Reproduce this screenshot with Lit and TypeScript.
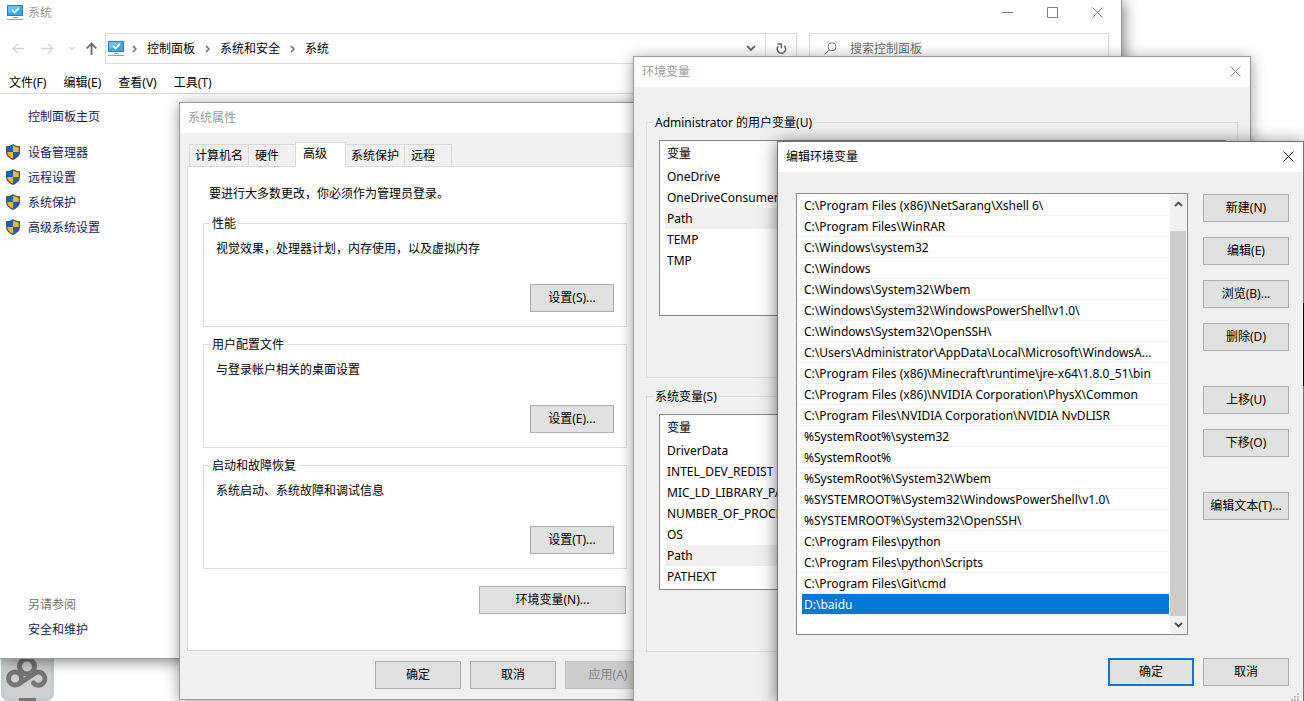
import { LitElement, html, css } from "lit";
import { customElement, property } from "lit/decorators.js";
import { classMap } from "lit/directives/class-map.js";

const base = css`
  *, *::before, *::after { box-sizing: border-box; }
  :host { display: block; }
  button, input, select { font: inherit; color: inherit; margin: 0; }
  svg { display: block; flex: none; }
  .btn {
    height: 28px; width: 86px; padding: 0; flex: none;
    background: #e1e1e1; border: 1px solid #adadad; border-radius: 0;
    white-space: nowrap; text-align: center; color: #000;
  }
  .btn.default { border: 2px solid #0078d7; }
  .btn:disabled { background: #cccccc; border-color: #bfbfbf; color: #838383; }
  .group {
    margin: 0; min-width: 0; border: 1px solid #dcdcdc; padding: 0;
  }
  .group > legend { padding: 2px 2px 0; line-height: 16px; margin-left: -6px; }
`;

const closeGlyph = (color: string) => html`
  <svg width="11" height="11" viewBox="0 0 11 11"><path d="M.5 .5L10.5 10.5M10.5 .5L.5 10.5" stroke=${color} fill="none"/></svg>`;

const monitor = html`
  <svg width="17" height="16" viewBox="0 0 17 16">
    <rect x=".5" y=".5" width="15" height="10" fill="#35a9f5" stroke="#3b7ba6"/>
    <path d="M1 1h14L1 8z" fill="#62c4fb"/>
    <path d="M5 5l2.500 2.500L12 3" stroke="#fff" stroke-width="1.800" fill="none"/>
    <path d="M6 12.500h5M0 14.500h16" stroke="#8ba3b4" stroke-width="1.200" fill="none"/>
  </svg>`;

const shield = html`
  <svg width="14" height="16" viewBox="0 0 14 16">
    <path d="M7 0C5 1.600 2.500 2.200 0 2.300V8c0 4 3.500 6.500 7 8 3.500-1.500 7-4 7-8V2.300C11.500 2.200 9 1.600 7 0z" fill="#4d5459"/>
    <path d="M7 1.500C5.500 2.700 3.500 3.200 1.300 3.400V8H7z" fill="#0d62c4"/>
    <path d="M7 1.500c1.500 1.200 3.500 1.700 5.700 1.900V8H7z" fill="#fdb72a"/>
    <path d="M1.300 8c0 3 2.700 5.200 5.700 6.600V8z" fill="#fdb72a"/>
    <path d="M12.700 8c0 3-2.700 5.200-5.700 6.600V8z" fill="#0d62c4"/>
  </svg>`;

const crumb = html`
  <svg class="crumb" width="5" height="8" viewBox="0 0 5 8"><path d="M1 1l3 3-3 3" stroke="#6d6d6d" stroke-width="1.500" fill="none"/></svg>`;

@customElement("control-panel")
class ControlPanel extends LitElement {
  static styles = [base, css`
    :host { display: flex; flex-direction: column; background: #fff; border: 1px solid #9a9a9a; border-width: 0 1px 1px 0; box-shadow: 2px 2px 14px rgba(0,0,0,.5); }
    .title { display: flex; align-items: center; height: 26px; padding-left: 7px; color: #999; }
    .title span { margin-left: 4px; flex: 1; }
    .caps { display: flex; gap: 34px; padding: 0 18px 2px 0; align-items: center; }
    .caps button { border: 0; background: none; padding: 0; }
    .bar { display: flex; align-items: center; margin-top: 7px; height: 31px; padding: 0 12px; }
    .nav { display: flex; align-items: center; width: 93px; flex: none; }
    .nav svg + svg { margin-left: 16px; }
    .nav svg.recent { margin-left: 15px; }
    .nav svg.up { margin-left: 11px; }
    .path { display: flex; flex: 1; align-items: center; border: 1px solid #d9d9d9; height: 31px; padding-left: 2px; min-width: 0; }
    .path .crumb { margin: 0 10px; }
    .path .crumb.first { margin: 0 10px 0 7px; }
    .path a { color: #000; text-decoration: none; white-space: nowrap; }
    .fill { flex: 1; }
    .refresh { width: 31px; height: 29px; margin-left: 9px; border: 0; border-left: 1px solid #d9d9d9; background: none; padding: 0 0 0 9px; }
    .search { display: flex; align-items: center; margin-left: 12px; width: 300px; height: 31px; border: 1px solid #d9d9d9; padding-left: 14px; }
    .search input { border: 0; outline: 0; background: none; padding: 0; margin-left: 13px; flex: 1; min-width: 0; }
    .search input::placeholder { color: #6d6d6d; opacity: 1; }
    .menu { display: flex; gap: 17px; height: 30px; padding: 8px 9px 0; line-height: 22px; border-bottom: 1px solid #d6d6d6; }
    .menu button { border: 0; background: none; padding: 0; line-height: 22px; height: 22px; }
    .side { flex: 1; display: flex; flex-direction: column; padding: 10px 6px 16px; line-height: 25px; }
    .side a { display: flex; align-items: center; height: 25px; color: #151c55; text-decoration: none; }
    .side svg { margin: 0 8px 2px 0; }
    .side .plain { padding-left: 22px; }
    .home { margin-bottom: 11px; }
    .also { margin-top: auto; color: #707070; }
  `];
  render() {
    return html`
      <div class="title">${monitor}<span>系统</span>
        <div class="caps">
          <button aria-label="最小化"><svg width="11" height="11" viewBox="0 0 11 11"><path d="M0 5.500h11" stroke="#7b7b7b"/></svg></button>
          <button aria-label="最大化"><svg width="11" height="11" viewBox="0 0 11 11"><path d="M.5 .5h10v10H.5z" stroke="#7b7b7b" fill="none"/></svg></button>
          <button aria-label="关闭">${closeGlyph("#7b7b7b")}</button>
        </div>
      </div>
      <div class="bar">
        <div class="nav">
          <svg width="13" height="11" viewBox="0 0 13 11"><path d="M12 5.500H1M6 .8L1.200 5.500 6 10.200" stroke="#d4d4d4" stroke-width="1.500" fill="none"/></svg>
          <svg width="13" height="11" viewBox="0 0 13 11"><path d="M0 5.500h11.500M7 .8l4.800 4.700L7 10.200" stroke="#d4d4d4" stroke-width="1.500" fill="none"/></svg>
          <svg class="recent" width="6" height="5" viewBox="0 0 6 5"><path d="M.5 1L3 3.500 5.500 1" stroke="#d4d4d4" stroke-width="1.300" fill="none"/></svg>
          <svg class="up" width="11" height="13" viewBox="0 0 11 13"><path d="M5.500 13V1.500M.7 6.300L5.500 1.500l4.800 4.800" stroke="#6c6c6c" stroke-width="1.800" fill="none"/></svg>
        </div>
        <div class="path">${monitor}
          <svg class="crumb first" width="5" height="8" viewBox="0 0 5 8"><path d="M1 1l3 3-3 3" stroke="#6d6d6d" stroke-width="1.500" fill="none"/></svg>
          <a href="#">控制面板</a>${crumb}<a href="#">系统和安全</a>${crumb}<a href="#">系统</a>
          <span class="fill"></span>
          <svg width="10" height="7" viewBox="0 0 10 7"><path d="M1 1l4 4 4-4" stroke="#6d6d6d" stroke-width="1.900" fill="none"/></svg>
          <button class="refresh" aria-label="刷新"><svg width="13" height="13" viewBox="0 0 13 13"><path d="M9.200 3.800A4.200 4.200 0 1 1 3.200 4.200" stroke="#6d6d6d" stroke-width="1.700" fill="none"/><path d="M2.200 2h4.200v4.200" stroke="#6d6d6d" stroke-width="1.600" fill="none"/></svg></button>
        </div>
        <label class="search" aria-label="搜索控制面板">
          <svg width="13" height="13" viewBox="0 0 13 13"><circle cx="8" cy="4.800" r="4" stroke="#808080" fill="none"/><path d="M5.200 7.700L.5 12.500" stroke="#808080"/></svg>
          <input type="text" placeholder="搜索控制面板" />
        </label>
      </div>
      <div class="menu"><button>文件(F)</button><button>编辑(E)</button><button>查看(V)</button><button>工具(T)</button></div>
      <nav class="side">
        <a class="plain home" href="#">控制面板主页</a>
        ${["设备管理器", "远程设置", "系统保护", "高级系统设置"].map((t) => html`<a href="#">${shield}${t}</a>`)}
        <div class="plain also">另请参阅</div>
        <a class="plain" href="#">安全和维护</a>
      </nav>`;
  }
}

@customElement("dialog-frame")
class DialogFrame extends LitElement {
  @property() heading = "";
  @property({ type: Boolean }) active = false;
  static styles = [base, css`
    :host { display: flex; flex-direction: column; background: #f0f0f0; border: 1px solid #9a9a9a; box-shadow: 0 2px 14px rgba(0,0,0,.4); }
    :host([active]) { border-color: #6f6f73; box-shadow: 0 2px 16px rgba(0,0,0,.55); }
    .title { display: flex; align-items: center; justify-content: space-between; height: 30px; flex: none; background: #fff; padding: 0 9px 0 8px; color: #999; }
    .title.active { color: #000; }
    .title button { border: 0; background: none; padding: 0 0 2px; }
  `];
  render() {
    return html`
      <header class=${classMap({ title: true, active: this.active })}>
        <span>${this.heading}</span>
        <button aria-label="关闭">${closeGlyph(this.active ? "#000" : "#8a8a8a")}</button>
      </header>
      <slot></slot>`;
  }
}

@customElement("app-root")
class AppRoot extends LitElement {
  static styles = [base, css`
    :host {
      display: block; position: relative; height: 100vh; min-height: 100%; overflow: hidden; background: #fff;
      font-family: "Noto Sans", "Noto Sans CJK SC", sans-serif; font-size: 12px; line-height: 16px; color: #000;
    }
    .shortcut { position: absolute; left: 1px; top: 647px; }
    .edge { position: absolute; right: 0; top: 303px; width: 1px; height: 83px; background: #000; z-index: 2; }
    control-panel { position: absolute; left: 0; right: 182px; top: 0; height: 659px; }
    .props { position: absolute; left: 179px; top: 102px; width: 480px; }
    .env { position: absolute; left: 633px; right: 53px; top: 56px; }
    .edit { position: absolute; left: 777px; right: 0; top: 141px; }

    .tabs { display: flex; align-items: flex-end; padding: 9px 0 0 9px; }
    .tab { height: 22px; padding: 0 5px; border: 1px solid #d9d9d9; border-width: 1px 1px 0 0; background: #f0f0f0; text-align: left; white-space: nowrap; }
    .tab.first { border-left-width: 1px; }
    .tab.wide { min-width: 47px; padding-left: 6px; }
    .tab.on { height: 25px; margin-bottom: -1px; padding: 0 7px 2px; min-width: 51px; background: #fff; position: relative; border-left-width: 1px; margin-left: -1px; }
    .page { margin: 0 7px; background: #fff; border: 1px solid #d9d9d9; padding: 19px 23px 36px 15px; display: flex; flex-direction: column; gap: 8px; }
    .note { margin: 0 0 4px 6px; }
    .page .group { height: 113px; padding: 9px 12px 14px; }
    .page .group p { margin: 0 0 27px; }
    .page .group .btn { display: block; width: 84px; margin-left: auto; }
    .page > .btn { width: 147px; margin: 9px 1px 0 auto; }
    .foot { display: flex; gap: 9px; justify-content: flex-end; padding: 10px 7px; }

    .env-body { padding: 26px 12px 60px; display: flex; flex-direction: column; gap: 9px; }
    .env-body .group { height: 265px; padding: 9px 11px 0 12px; }
    .vars { height: 176px; background: #fff; border: 1px solid #828790; padding-left: 5px; overflow: hidden; }
    .vars table { border-collapse: collapse; width: 100%; }
    .vars th { font-weight: 400; text-align: left; height: 25px; padding: 0 2px; }
    .vars td { height: 21px; padding: 0 2px; }
    .vars .sel { background: #f0f0f0; }

    .edit-body { display: flex; gap: 15px; padding: 21px 14px 0 18px; }
    .box { flex: 1; min-width: 0; height: 442px; display: flex; background: #fff; border: 1px solid #828790; padding: 1px; }
    .paths { flex: 1; min-width: 0; list-style: none; margin: 0; padding: 0; }
    .paths li { height: 21px; border-bottom: 1px solid #f0f0f0; padding-left: 4px; }
    .paths span { display: block; height: 20px; line-height: 22px; padding: 0 2px; overflow: hidden; text-overflow: ellipsis; white-space: nowrap; }
    .paths .sel { background: #0078d7; color: #fff; }
    .scroll { width: 16px; margin-left: 1px; background: #f0f0f0; display: flex; flex-direction: column; align-items: center; }
    .scroll .thumb { flex: 1; width: 16px; background: #cdcdcd; margin: 19px 0 0; }
    .scroll svg { margin: 6px 0 5px; }
    .ops { display: flex; flex-direction: column; gap: 35px; padding-top: 1px; }
    .set { display: flex; flex-direction: column; gap: 15px; }
    .confirm { display: flex; justify-content: flex-end; gap: 9px; padding: 23px 14px 16px; }
    .grip { position: absolute; right: 3px; bottom: 0; }
  `];

  private group(title: string, text: string, key: string) {
    return html`<fieldset class="group"><legend>${title}</legend><p>${text}</p><button class="btn">设置(${key})...</button></fieldset>`;
  }

  private vars(title: string, names: string[]) {
    return html`<fieldset class="group"><legend>${title}</legend>
      <div class="vars"><table>
        <thead><tr><th>变量</th></tr></thead>
        <tbody>${names.map((n) => html`<tr class=${classMap({ sel: n === "Path" })}><td>${n}</td></tr>`)}</tbody>
      </table></div></fieldset>`;
  }

  render() {
    const paths = [
      "C:\\Program Files (x86)\\NetSarang\\Xshell 6\\", "C:\\Program Files\\WinRAR", "C:\\Windows\\system32", "C:\\Windows",
      "C:\\Windows\\System32\\Wbem", "C:\\Windows\\System32\\WindowsPowerShell\\v1.0\\", "C:\\Windows\\System32\\OpenSSH\\",
      "C:\\Users\\Administrator\\AppData\\Local\\Microsoft\\WindowsA...", "C:\\Program Files (x86)\\Minecraft\\runtime\\jre-x64\\1.8.0_51\\bin",
      "C:\\Program Files (x86)\\NVIDIA Corporation\\PhysX\\Common", "C:\\Program Files\\NVIDIA Corporation\\NVIDIA NvDLISR",
      "%SystemRoot%\\system32", "%SystemRoot%", "%SystemRoot%\\System32\\Wbem", "%SYSTEMROOT%\\System32\\WindowsPowerShell\\v1.0\\",
      "%SYSTEMROOT%\\System32\\OpenSSH\\", "C:\\Program Files\\python", "C:\\Program Files\\python\\Scripts", "C:\\Program Files\\Git\\cmd", "D:\\baidu",
    ];
    return html`
      <svg class="shortcut" width="53" height="54" viewBox="0 0 53 54">
        <rect x="1.500" y="1.500" width="50" height="51" rx="6" fill="#cfcfcf" stroke="#bfcdd0" stroke-width="3"/>
        <g fill="none" stroke="#757575" stroke-width="5" stroke-linecap="round">
          <circle cx="26" cy="19.500" r="7.500"/><circle cx="14" cy="31.500" r="6.500"/>
          <path d="M18.500 36.500L33.500 26.500a6.500 6.500 0 1 1-1 9.500"/>
        </g>
        <path d="M18 51h17v3H18z" fill="#757575"/>
      </svg>
      <control-panel></control-panel>

      <dialog-frame class="props" heading="系统属性">
        <div class="tabs" role="tablist">
          <button class="tab first" role="tab">计算机名</button>
          <button class="tab wide" role="tab">硬件</button>
          <button class="tab on" role="tab" aria-selected="true">高级</button>
          <button class="tab" role="tab">系统保护</button>
          <button class="tab wide" role="tab">远程</button>
        </div>
        <div class="page">
          <p class="note">要进行大多数更改，你必须作为管理员登录。</p>
          ${this.group("性能", "视觉效果，处理器计划，内存使用，以及虚拟内存", "S")}
          ${this.group("用户配置文件", "与登录帐户相关的桌面设置", "E")}
          ${this.group("启动和故障恢复", "系统启动、系统故障和调试信息", "T")}
          <button class="btn">环境变量(N)...</button>
        </div>
        <div class="foot"><button class="btn">确定</button><button class="btn">取消</button><button class="btn" disabled>应用(A)</button></div>
      </dialog-frame>

      <dialog-frame class="env" heading="环境变量">
        <div class="env-body">
          ${this.vars("Administrator 的用户变量(U)", ["OneDrive", "OneDriveConsumer", "Path", "TEMP", "TMP"])}
          ${this.vars("系统变量(S)", ["DriverData", "INTEL_DEV_REDIST", "MIC_LD_LIBRARY_PATH", "NUMBER_OF_PROCESSORS", "OS", "Path", "PATHEXT"])}
        </div>
      </dialog-frame>

      <dialog-frame class="edit" heading="编辑环境变量" active>
        <div class="edit-body">
          <div class="box">
            <ul class="paths">${paths.map((p) => html`<li><span class=${classMap({ sel: p === "D:\\baidu" })}>${p}</span></li>`)}</ul>
            <div class="scroll">
              <svg width="9" height="6" viewBox="0 0 9 6"><path d="M1 5l3.500-3.500L8 5" stroke="#505050" stroke-width="1.900" fill="none"/></svg>
              <div class="thumb"></div>
              <svg width="9" height="6" viewBox="0 0 9 6"><path d="M1 1l3.500 3.500L8 1" stroke="#505050" stroke-width="1.900" fill="none"/></svg>
            </div>
          </div>
          <div class="ops">
            <div class="set"><button class="btn">新建(N)</button><button class="btn">编辑(E)</button><button class="btn">浏览(B)...</button><button class="btn">删除(D)</button></div>
            <div class="set"><button class="btn">上移(U)</button><button class="btn">下移(O)</button></div>
            <div class="set"><button class="btn">编辑文本(T)...</button></div>
          </div>
        </div>
        <div class="confirm"><button class="btn default">确定</button><button class="btn">取消</button></div>
        <svg class="grip" width="9" height="9" viewBox="0 0 9 9"><path d="M6 0h2v2H6zM3 3h2v2H3zM6 3h2v2H6zM0 6h2v2H0zM3 6h2v2H3zM6 6h2v2H6z" fill="#bcbcbc"/></svg>
      </dialog-frame>
      <div class="edge"></div>`;
  }
}
